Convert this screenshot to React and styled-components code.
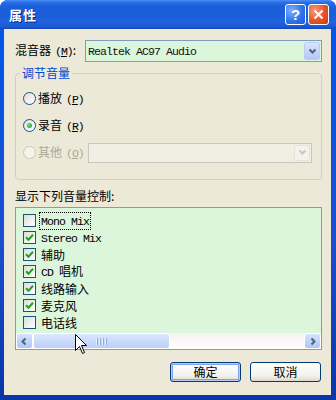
import React from 'react';
import styled, { createGlobalStyle } from 'styled-components';

const GlobalStyle = createGlobalStyle`
  html, body { margin: 0; padding: 0; background: #fff; }
  body {
    font-family: "Noto Sans CJK SC", "DejaVu Sans", sans-serif;
    font-size: 12px;
    color: #000;
  }
`;

const Window = styled.div`
  position: relative;
  width: 336px;
  height: 400px;
  box-sizing: border-box;
  display: flex;
  flex-direction: column;
  border-radius: 8px 8px 0 0;
  overflow: hidden;
  background: linear-gradient(to bottom, #0058ee, #1a4fd0 60%, #0b35a8);
`;

const TitleBar = styled.div`
  height: 29px;
  flex: none;
  display: flex;
  align-items: center;
  justify-content: space-between;
  padding: 0 7px 0 9px;
  background: linear-gradient(
    to bottom,
    #4a90f8 0%,
    #2a6fe6 8%,
    #1d60dc 20%,
    #1b5cd8 50%,
    #2164e0 75%,
    #1b58d2 92%,
    #1248b8 100%
  );
`;

const Title = styled.span`
  color: #fff;
  font-weight: bold;
  font-size: 13px;
  line-height: 16px;
  letter-spacing: 1px;
  text-shadow: 1px 1px 0 #0a1f8a;
`;

const TitleButtons = styled.div`
  display: flex;
  gap: 2px;
`;

const TitleButton = styled.div`
  width: 21px;
  height: 21px;
  box-sizing: border-box;
  border: 1px solid #fff;
  border-radius: 3px;
  display: flex;
  align-items: center;
  justify-content: center;
  color: #fff;
  font-family: "Liberation Sans", sans-serif;
  font-weight: bold;
  font-size: 15px;
  background: ${(p) =>
    p.$close
      ? 'radial-gradient(circle at 30% 30%, #f59a7c, #e3542b 55%, #c93a12)'
      : 'radial-gradient(circle at 30% 30%, #7fb0ff, #2f74ec 55%, #1f58d4)'};
`;

const Body = styled.div`
  flex: 1;
  margin: 0 5px 5px 4px;
  background: #ece9d8;
  padding: 11px 9px 0 11px;
  display: flex;
  flex-direction: column;
`;

const MixerRow = styled.div`
  display: flex;
  align-items: center;
  height: 22px;
`;

const FieldLabel = styled.span`
  width: 70px;
  flex: none;
  line-height: 16px;
  white-space: nowrap;
`;

const Lat = styled.span`
  font-family: "Liberation Mono", monospace;
  font-size: 11.5px;
  letter-spacing: -0.9px;
`;

const Key = styled.span`
  font-family: "Liberation Mono", monospace;
  font-size: 11.5px;
  letter-spacing: -1px;
  margin-left: 4px;
  & u { text-underline-offset: 1px; }
`;

const Combo = styled.div`
  flex: 1;
  height: ${(p) => (p.$disabled ? '20px' : '22px')};
  box-sizing: border-box;
  border: 1px solid ${(p) => (p.$disabled ? '#c9c7ba' : '#7f9db9')};
  background: ${(p) => (p.$disabled ? '#f1efe4' : '#dcf6db')};
  display: flex;
  align-items: center;
  padding: 1px 1px 1px 2px;
`;

const ComboText = styled.span`
  flex: 1;
  font-family: "Liberation Mono", monospace;
  font-size: 11.5px;
  letter-spacing: -0.9px;
  color: #111;
`;

const DropButton = styled.div`
  width: 16px;
  align-self: stretch;
  box-sizing: border-box;
  border-radius: 2px;
  display: flex;
  align-items: center;
  justify-content: center;
  border: 1px solid ${(p) => (p.$disabled ? '#e4e2d8' : '#bccdf3')};
  background: ${(p) =>
    p.$disabled
      ? '#f3f2ec'
      : 'linear-gradient(to bottom, #dbe5fb, #c2d3f8 60%, #b3c7f3)'};
`;

const Group = styled.fieldset`
  margin: 4px 0 0 0;
  padding: 5px 9px 13px 7px;
  border: 1px solid #d0d0bf;
  border-radius: 4px;
  min-width: 0;
  display: flex;
  flex-direction: column;
`;

const Legend = styled.legend`
  margin-left: -3px;
  padding: 0 2px;
  color: #0046d5;
  font-size: 12px;
  line-height: 14px;
`;

const RadioRow = styled.div`
  height: 27px;
  display: flex;
  align-items: center;
  gap: 2px;
  color: ${(p) => (p.$disabled ? '#aca899' : '#000')};
`;

const RadioCircle = styled.span`
  width: 13px;
  height: 13px;
  flex: none;
  box-sizing: border-box;
  border-radius: 50%;
  border: 1px solid ${(p) => (p.$disabled ? '#cac8bb' : '#1c5180')};
  background: ${(p) =>
    p.$disabled ? '#f4f3ea' : 'linear-gradient(135deg, #dcdcd7, #ffffff)'};
  display: flex;
  align-items: center;
  justify-content: center;
  &::after {
    content: '';
    display: ${(p) => (p.$checked ? 'block' : 'none')};
    width: 5px;
    height: 5px;
    border-radius: 50%;
    background: radial-gradient(circle at 35% 35%, #6fdc6f, #21a121);
  }
`;

const RadioLabel = styled.span`
  line-height: 16px;
  min-width: ${(p) => p.$width || 0}px;
  white-space: nowrap;
`;

const Caption = styled.div`
  margin-top: 8px;
  line-height: 16px;
`;

const List = styled.div`
  margin-top: 3px;
  height: 143px;
  box-sizing: border-box;
  border: 1px solid #7f9db9;
  background: #dcf6db;
  padding: 4px 0 0 0;
  display: flex;
  flex-direction: column;
`;

const Item = styled.div`
  height: 17px;
  display: flex;
  align-items: center;
  padding-left: 7px;
  gap: 4px;
`;

const CheckBox = styled.span`
  width: 13px;
  height: 13px;
  flex: none;
  box-sizing: border-box;
  border: 1px solid #1c5180;
  background: linear-gradient(135deg, #dcdcd7, #ffffff);
  display: flex;
  align-items: center;
  justify-content: center;
`;

const ItemText = styled.span`
  line-height: 14px;
  padding: 0 1px;
  outline: ${(p) => (p.$focus ? '1px dotted #000' : 'none')};
  white-space: nowrap;
`;

const HScroll = styled.div`
  margin-top: auto;
  height: 16px;
  display: flex;
  background: linear-gradient(to bottom, #f4f3ee, #fefefe);
`;

const ScrollArrow = styled.div`
  width: 17px;
  flex: none;
  box-sizing: border-box;
  border: 1px solid #fff;
  border-radius: 3px;
  background: linear-gradient(to bottom, #d6e2fb, #bfd1f8 60%, #b0c6f4);
  display: flex;
  align-items: center;
  justify-content: center;
`;

const Thumb = styled.div`
  width: 137px;
  flex: none;
  box-sizing: border-box;
  border: 1px solid #fff;
  border-radius: 3px;
  background: linear-gradient(to bottom, #dde7fc, #c8d8fa 60%, #bccff7);
  display: flex;
  align-items: center;
  justify-content: center;
  gap: 1px;
`;

const Grip = styled.span`
  width: 1px;
  height: 7px;
  background: #e8eefc;
  border-right: 1px solid #8fa9e6;
`;

const ScrollTrack = styled.div`
  flex: 1;
`;

const ButtonRow = styled.div`
  margin-top: 12px;
  display: flex;
  justify-content: flex-end;
  gap: 9px;
  padding-right: 1px;
`;

const Button = styled.div`
  width: 71px;
  height: 20px;
  box-sizing: border-box;
  border: 1px solid #003c74;
  border-radius: 3px;
  background: linear-gradient(to bottom, #ffffff, #f3f2ee 70%, #dcd8cc);
  display: flex;
  align-items: center;
  justify-content: center;
  line-height: 14px;
  box-shadow: ${(p) =>
    p.$default ? 'inset 0 0 0 1px #b7cdf5, inset 0 0 0 2px #7ea1e8' : 'none'};
`;

const Cursor = styled.svg`
  position: absolute;
  left: 75px;
  top: 334px;
`;

const Chevron = ({ dir = 'down', color = '#4d6185' }) => {
  const paths = {
    down: 'M1.5 2.5 L4.5 5.5 L7.5 2.5',
    left: 'M5.5 1.5 L2.5 4.5 L5.5 7.5',
    right: 'M3.5 1.5 L6.5 4.5 L3.5 7.5',
  };
  return (
    <svg width="9" height="9" viewBox="0 0 9 9">
      <path d={paths[dir]} fill="none" stroke={color} strokeWidth="2" />
    </svg>
  );
};

const Check = () => (
  <svg width="9" height="9" viewBox="0 0 9 9">
    <path d="M1 4.2 L3.5 6.7 L8 1.8" fill="none" stroke="#21a121" strokeWidth="2" />
  </svg>
);

const controls = [
  { label: <Lat>Mono Mix</Lat>, checked: false, focus: true },
  { label: <Lat>Stereo Mix</Lat>, checked: true },
  { label: '辅助', checked: true },
  { label: <><Lat>CD </Lat>唱机</>, checked: true },
  { label: '线路输入', checked: true },
  { label: '麦克风', checked: true },
  { label: '电话线', checked: false },
];

export default function App() {
  return (
    <>
      <GlobalStyle />
      <Window>
        <TitleBar>
          <Title>属性</Title>
          <TitleButtons>
            <TitleButton>?</TitleButton>
            <TitleButton $close>
              <svg width="11" height="11" viewBox="0 0 11 11">
                <path d="M1.5 1.5 L9.5 9.5 M9.5 1.5 L1.5 9.5" stroke="#fff" strokeWidth="2" />
              </svg>
            </TitleButton>
          </TitleButtons>
        </TitleBar>

        <Body>
          <MixerRow>
            <FieldLabel>
              混音器<Key>(<u>M</u>)</Key>:
            </FieldLabel>
            <Combo>
              <ComboText>Realtek AC97 Audio</ComboText>
              <DropButton>
                <Chevron />
              </DropButton>
            </Combo>
          </MixerRow>

          <Group>
            <Legend>调节音量</Legend>
            <RadioRow>
              <RadioCircle />
              <RadioLabel>
                播放<Key>(<u>P</u>)</Key>
              </RadioLabel>
            </RadioRow>
            <RadioRow>
              <RadioCircle $checked />
              <RadioLabel>
                录音<Key>(<u>R</u>)</Key>
              </RadioLabel>
            </RadioRow>
            <RadioRow $disabled>
              <RadioCircle $disabled />
              <RadioLabel $width={48}>
                其他<Key>(<u>O</u>)</Key>
              </RadioLabel>
              <Combo $disabled>
                <ComboText />
                <DropButton $disabled>
                  <Chevron color="#c9c7ba" />
                </DropButton>
              </Combo>
            </RadioRow>
          </Group>

          <Caption>显示下列音量控制:</Caption>
          <List>
            {controls.map((c, i) => (
              <Item key={i}>
                <CheckBox>{c.checked && <Check />}</CheckBox>
                <ItemText $focus={c.focus}>{c.label}</ItemText>
              </Item>
            ))}
            <HScroll>
              <ScrollArrow>
                <Chevron dir="left" />
              </ScrollArrow>
              <Thumb>
                <Grip />
                <Grip />
                <Grip />
                <Grip />
              </Thumb>
              <ScrollTrack />
              <ScrollArrow>
                <Chevron dir="right" />
              </ScrollArrow>
            </HScroll>
          </List>

          <ButtonRow>
            <Button $default>确定</Button>
            <Button>取消</Button>
          </ButtonRow>
        </Body>

        <Cursor width="13" height="21" viewBox="0 0 13 21">
          <path
            d="M0.5 0.5 L0.5 16.5 L4.5 12.5 L7.5 19.5 L9.5 18.5 L6.5 11.5 L11.5 11.5 Z"
            fill="#fff"
            stroke="#000"
            strokeWidth="1"
          />
        </Cursor>
      </Window>
    </>
  );
}
